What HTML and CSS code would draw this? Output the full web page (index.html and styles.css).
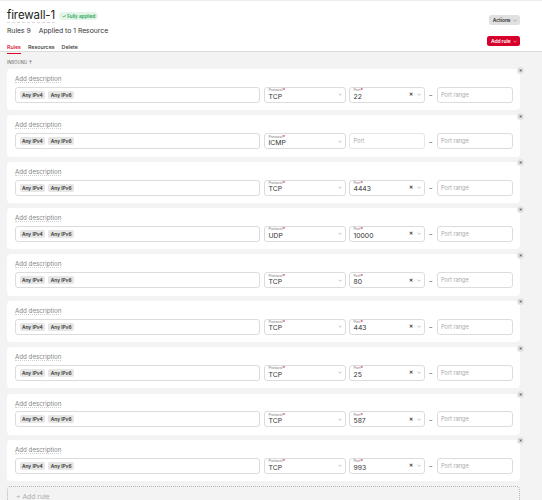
FILE: index.html
```html
<!DOCTYPE html>
<html>
<head>
<meta charset="utf-8">
<link rel="stylesheet" href="styles.css">
</head>
<body>
<header class="head">
  <div class="head-main">
    <div class="title-row">
      <h1 class="title">firewall-1</h1>
      <span class="badge">✓ Fully applied</span>
    </div>
    <div class="meta"><span>Rules 9</span><span>Applied to 1 Resource</span></div>
    <nav class="tabs">
      <span class="tab active">Rules</span>
      <span class="tab">Resources</span>
      <span class="tab">Delete</span>
    </nav>
  </div>
  <div class="head-actions">
    <button class="btn btn-gray">Actions <svg class="chev" viewBox="0 0 8 5"><path d="M1 1l3 3 3-3" fill="none" stroke="currentColor" stroke-width="1"/></svg></button>
    <button class="btn btn-red">Add rule <svg class="chev" viewBox="0 0 8 5"><path d="M1 1l3 3 3-3" fill="none" stroke="currentColor" stroke-width="1"/></svg></button>
  </div>
</header>

<main class="content">
  <div class="section-label">INBOUND <span class="arrow">↑</span></div>
  <div class="rules" id="rules"></div>
  <div class="add-rule">+ Add rule</div>
</main>

<script>
const rules = [
  ["TCP","22"],["ICMP",""],["TCP","4443"],["UDP","10000"],["TCP","80"],
  ["TCP","443"],["TCP","25"],["TCP","587"],["TCP","993"]
];
const chev = '<svg class="chev-s" viewBox="0 0 8 5"><path d="M1 1l3 3 3-3" fill="none" stroke="currentColor" stroke-width="0.9"/></svg>';
const host = document.getElementById('rules');
rules.forEach(([proto, port]) => {
  const card = document.createElement('div');
  card.className = 'card';
  const portField = proto === 'ICMP'
    ? '<div class="field port empty"><span class="ph">Port</span></div>'
    : '<div class="field port"><div class="lv"><span class="lbl">Port<i>*</i></span><span class="val">' + port + '</span></div><span class="clear">✕</span>' + chev + '</div>';
  card.innerHTML =
    '<span class="close">✕</span>' +
    '<div class="desc"><span>Add description</span></div>' +
    '<div class="row">' +
      '<div class="field src"><span class="chip">Any IPv4</span><span class="chip">Any IPv6</span></div>' +
      '<div class="field proto"><div class="lv"><span class="lbl">Protocol<i>*</i></span><span class="val">' + proto + '</span></div>' + chev + '</div>' +
      portField +
      '<span class="dash">–</span>' +
      '<div class="field range"><span class="ph">Port range</span></div>' +
    '</div>';
  host.appendChild(card);
});
</script>
</body>
</html>
```

FILE: styles.css
```css
* { box-sizing: border-box; }
html, body { margin: 0; padding: 0; }
body {
  width: 542px;
  height: 500px;
  overflow: hidden;
  background: #f3f3f3;
  font-family: Inter, "Noto Sans", sans-serif;
  color: #222;
}
.head {
  background: #fff;
  border-top: 1px solid #ececec;
  border-bottom: 1px solid #dcdcdc;
  height: 52px;
  display: flex;
  justify-content: space-between;
  padding: 0 22px 0 7px;
}
.head-main { display: flex; flex-direction: column; }
.title-row { display: flex; align-items: center; gap: 4px; margin-top: 8px; height: 14px; }
.title {
  margin: 0;
  font-size: 11.5px;
  font-weight: 400;
  line-height: 13px;
  color: #222;
  border-bottom: 1px dashed #d8d8d8;
  letter-spacing: -0.1px;
}
.badge {
  background: #e2f6e8;
  color: #2f9e58;
  font-size: 4.6px;
  font-weight: 600;
  border-radius: 4px;
  padding: 1.5px 3px;
  line-height: 5px;
}
.meta { display: flex; gap: 8px; font-size: 6.8px; margin-top: 3px; color: #333; line-height: 9px; }
.tabs { display: flex; gap: 7px; margin-top: 9px; font-size: 5.3px; font-weight: 500; color: #333; }
.tab { padding-bottom: 3px; line-height: 6px; }
.tab.active { color: #d6002a; border-bottom: 1.2px solid #d6002a; }
.head-actions { display: flex; flex-direction: column; align-items: flex-end; padding-top: 14px; gap: 11px; }
.btn {
  border: none;
  border-radius: 2.5px;
  font-family: Inter, sans-serif;
  font-size: 5px;
  font-weight: 600;
  height: 10px;
  padding: 0 3px 0 3.5px;
  display: flex;
  align-items: center;
  gap: 2.5px;
  white-space: nowrap;
  letter-spacing: -0.1px;
}
.btn-gray { background: #e0e0e0; color: #333; }
.btn-red { background: #d6002a; color: #fff; }
.chev { width: 4px; height: 3px; }
.btn-gray .chev { color: #777; }

.content { padding: 0 22px 0 7px; }
.section-label { font-size: 4.2px; color: #666; margin-top: 8px; height: 9px; line-height: 5px; letter-spacing: 0.1px; }
.section-label .arrow { font-size: 4.5px; }
.rules { display: flex; flex-direction: column; gap: 5.175px; }
.card {
  position: relative;
  background: #fff;
  border-radius: 4px;
  height: 41.2px;
  padding: 4px 7px 0 8px;
}
.close {
  position: absolute;
  right: -4px;
  top: -2.5px;
  width: 7px;
  height: 7px;
  border-radius: 50%;
  background: #e4e4e4;
  color: #444;
  font-size: 4px;
  line-height: 7px;
  text-align: center;
  font-weight: 700;
}
.desc { height: 11px; line-height: 11px; font-size: 6.2px; color: #858585; margin-bottom: 2.8px; }
.desc span { border-bottom: 1px dotted #cfcfcf; }
.row { display: flex; align-items: center; height: 16px; }
.field {
  height: 16px;
  border: 1px solid #dcdcdc;
  border-radius: 3px;
  display: flex;
  align-items: center;
  background: #fff;
}
.src { width: 245px; gap: 3px; padding-left: 3.5px; }
.chip {
  background: #e6e6e6;
  color: #333;
  font-size: 4.8px;
  font-weight: 600;
  border-radius: 2px;
  height: 8px;
  line-height: 8px;
  padding: 0 2.5px;
}
.proto { width: 82px; margin-left: 4px; padding: 0 3px 0 3.5px; }
.port { width: 76px; margin-left: 3px; padding: 0 3px 0 3.5px; }
.port.empty { border-color: #e6e6e6; }
.lv { flex: 1; display: flex; flex-direction: column; line-height: 1; }
.lbl { font-size: 3.6px; color: #777; height: 4px; }
.lbl i { color: #d6002a; font-style: normal; font-size: 5px; vertical-align: top; position: relative; top: -1px; }
.val { font-size: 6.8px; color: #333; margin-top: 0.5px; }
.chev-s { width: 4.5px; height: 3px; color: #888; }
.clear { font-size: 4.5px; color: #333; margin-right: 3.5px; font-weight: 700; }
.ph { font-size: 5.6px; color: #aaa; }
.dash { width: 11.5px; text-align: center; font-size: 6px; color: #444; }
.range { width: 76px; padding-left: 3.5px; }
.add-rule {
  margin-top: 5.3px;
  height: 30px;
  border: 1px dotted #b5b5b5;
  border-radius: 4px;
  font-size: 6.8px;
  color: #aaa;
  padding: 5px 0 0 8px;
}
```
